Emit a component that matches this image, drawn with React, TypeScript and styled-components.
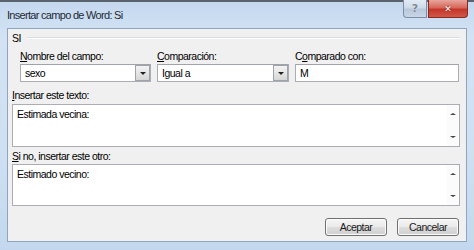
import React from "react";
import styled, { createGlobalStyle } from "styled-components";

const GlobalStyle = createGlobalStyle`
  html, body {
    margin: 0;
    padding: 0;
    background: #bcd2ea;
  }
  body {
    font-family: "Liberation Sans", "Noto Sans", sans-serif;
    font-size: 10.5px;
    letter-spacing: -0.5px;
    color: #000;
  }
`;

const Window = styled.div`
  width: 474px;
  height: 250px;
  box-sizing: border-box;
  display: flex;
  flex-direction: column;
  border-top: 2px solid #59626d;
  background: linear-gradient(180deg, #c4d8ee 0%, #d3e3f4 14%, #cfe0f2 60%, #c3d8ee 100%);
`;

const TitleBar = styled.div`
  height: 26px;
  display: flex;
  align-items: flex-start;
  padding: 0 6px 0 7px;
`;

const Title = styled.span`
  font-size: 11px;
  letter-spacing: -0.7px;
  line-height: 12px;
  margin-top: 7px;
  color: #1e2a36;
`;

const Controls = styled.div`
  margin-left: auto;
  display: flex;
  margin-top: -2px;
`;

const CaptionButton = styled.div<{ $close?: boolean }>`
  height: 18px;
  width: ${(p) => (p.$close ? "40px" : "24px")};
  box-sizing: border-box;
  display: flex;
  align-items: center;
  justify-content: center;
  border: 1px solid ${(p) => (p.$close ? "#8a2a20" : "#7d8ea3")};
  border-top: none;
  border-radius: ${(p) => (p.$close ? "0 0 4px 0" : "0 0 0 4px")};
  margin-left: ${(p) => (p.$close ? "1px" : "0")};
  background: ${(p) =>
    p.$close
      ? "linear-gradient(180deg, #e8a59d 0%, #d7685c 45%, #c3372a 55%, #d0574a 100%)"
      : "linear-gradient(180deg, #e2ebf5 0%, #cfdbe9 45%, #b8c8dc 55%, #c9d6e6 100%)"};
  color: ${(p) => (p.$close ? "#fff" : "#7b8796")};
  font-family: "DejaVu Sans", sans-serif;
  font-size: ${(p) => (p.$close ? "9px" : "11px")};
  letter-spacing: 0;
  font-weight: bold;
  text-shadow: ${(p) => (p.$close ? "0 0 2px #6b1208" : "0 0 1px #fff")};
`;

const Client = styled.div`
  flex: 1;
  margin: 0 7px 8px 7px;
  border: 1px solid #8ea5c2;
  background: #f0f0f0;
  display: flex;
  flex-direction: column;
  padding: 2px 6px 4px 4px;
`;

const GroupHeader = styled.div`
  height: 14px;
  display: flex;
  align-items: center;
  gap: 6px;
  line-height: 14px;
`;

const GroupLine = styled.div`
  flex: 1;
  height: 0;
  border-top: 1px solid #d5dfe5;
  border-bottom: 1px solid #fff;
  margin-top: -1px;
`;

const FieldsRow = styled.div`
  display: grid;
  grid-template-columns: 131px 132px 164px;
  column-gap: 6px;
  margin: 4px 0 0 8px;
`;

const Field = styled.div`
  display: flex;
  flex-direction: column;
  gap: 1px;
`;

const Label = styled.div<{ $top?: number }>`
  height: 14px;
  line-height: 14px;
  margin-top: ${(p) => p.$top ?? 0}px;
  color: #000;
`;

const Key = styled.span`
  text-decoration: underline;
`;

const Box = styled.div`
  height: 18px;
  box-sizing: border-box;
  border: 1px solid #abadb3;
  border-top-color: #a0a3aa;
  background: #fff;
  display: flex;
  align-items: center;
  padding-left: 4px;
`;

const BoxText = styled.span`
  flex: 1;
`;

const DropButton = styled.div`
  width: 15px;
  height: 16px;
  box-sizing: border-box;
  border: 1px solid #9fa4ab;
  background: linear-gradient(180deg, #f3f3f3 0%, #e5e5e5 50%, #d6d6d6 100%);
  display: flex;
  align-items: center;
  justify-content: center;
`;

const Caret = styled.div<{ $up?: boolean; $light?: boolean }>`
  width: 0;
  height: 0;
  border-left: 3px solid transparent;
  border-right: 3px solid transparent;
  ${(p) =>
    p.$up
      ? `border-bottom: ${p.$light ? 2 : 3}px solid ${p.$light ? "#444" : "#222"};`
      : `border-top: ${p.$light ? 2 : 3}px solid ${p.$light ? "#444" : "#222"};`}
`;

const TextArea = styled.div<{ $height: number; $top: number }>`
  height: ${(p) => p.$height}px;
  margin-top: ${(p) => p.$top}px;
  box-sizing: border-box;
  border: 1px solid #abadb3;
  background: #fff;
  display: flex;
`;

const AreaText = styled.div`
  flex: 1;
  padding: 2px 4px;
  line-height: 14px;
`;

const ScrollBar = styled.div`
  width: 12px;
  display: flex;
  flex-direction: column;
  justify-content: space-between;
  align-items: center;
  padding: 8px 0 8px;
  background: #fbfbfb;
`;

const ButtonRow = styled.div`
  display: flex;
  justify-content: flex-end;
  gap: 10px;
  margin-top: 12px;
  padding-right: 1px;
`;

const Button = styled.div`
  width: 62px;
  height: 18px;
  box-sizing: border-box;
  border: 1px solid #707070;
  border-radius: 3px;
  background: linear-gradient(180deg, #f6f6f6 0%, #eaeaea 48%, #dddddd 52%, #cfcfcf 100%);
  box-shadow: inset 0 0 0 1px #fcfcfc;
  display: flex;
  align-items: center;
  justify-content: center;
  color: #1a1a1a;
`;

export default function App() {
  return (
    <>
      <GlobalStyle />
      <Window>
        <TitleBar>
          <Title>Insertar campo de Word: Si</Title>
          <Controls>
            <CaptionButton>?</CaptionButton>
            <CaptionButton $close>✕</CaptionButton>
          </Controls>
        </TitleBar>
        <Client>
          <GroupHeader>
            <span>SI</span>
            <GroupLine />
          </GroupHeader>
          <FieldsRow>
            <Field>
              <Label>
                <Key>N</Key>ombre del campo:
              </Label>
              <Box>
                <BoxText>sexo</BoxText>
                <DropButton>
                  <Caret />
                </DropButton>
              </Box>
            </Field>
            <Field>
              <Label>
                <Key>C</Key>omparación:
              </Label>
              <Box>
                <BoxText>Igual a</BoxText>
                <DropButton>
                  <Caret />
                </DropButton>
              </Box>
            </Field>
            <Field>
              <Label>
                C<Key>o</Key>mparado con:
              </Label>
              <Box>
                <BoxText>M</BoxText>
              </Box>
            </Field>
          </FieldsRow>
          <Label $top={6}>
            <Key>I</Key>nsertar este texto:
          </Label>
          <TextArea $height={43} $top={2}>
            <AreaText>Estimada vecina:</AreaText>
            <ScrollBar>
              <Caret $up $light />
              <Caret $light />
            </ScrollBar>
          </TextArea>
          <Label $top={2}>
            <Key>S</Key>i no, insertar este otro:
          </Label>
          <TextArea $height={42} $top={1}>
            <AreaText>Estimado vecino:</AreaText>
            <ScrollBar>
              <Caret $up $light />
              <Caret $light />
            </ScrollBar>
          </TextArea>
          <ButtonRow>
            <Button>Aceptar</Button>
            <Button>Cancelar</Button>
          </ButtonRow>
        </Client>
      </Window>
    </>
  );
}
